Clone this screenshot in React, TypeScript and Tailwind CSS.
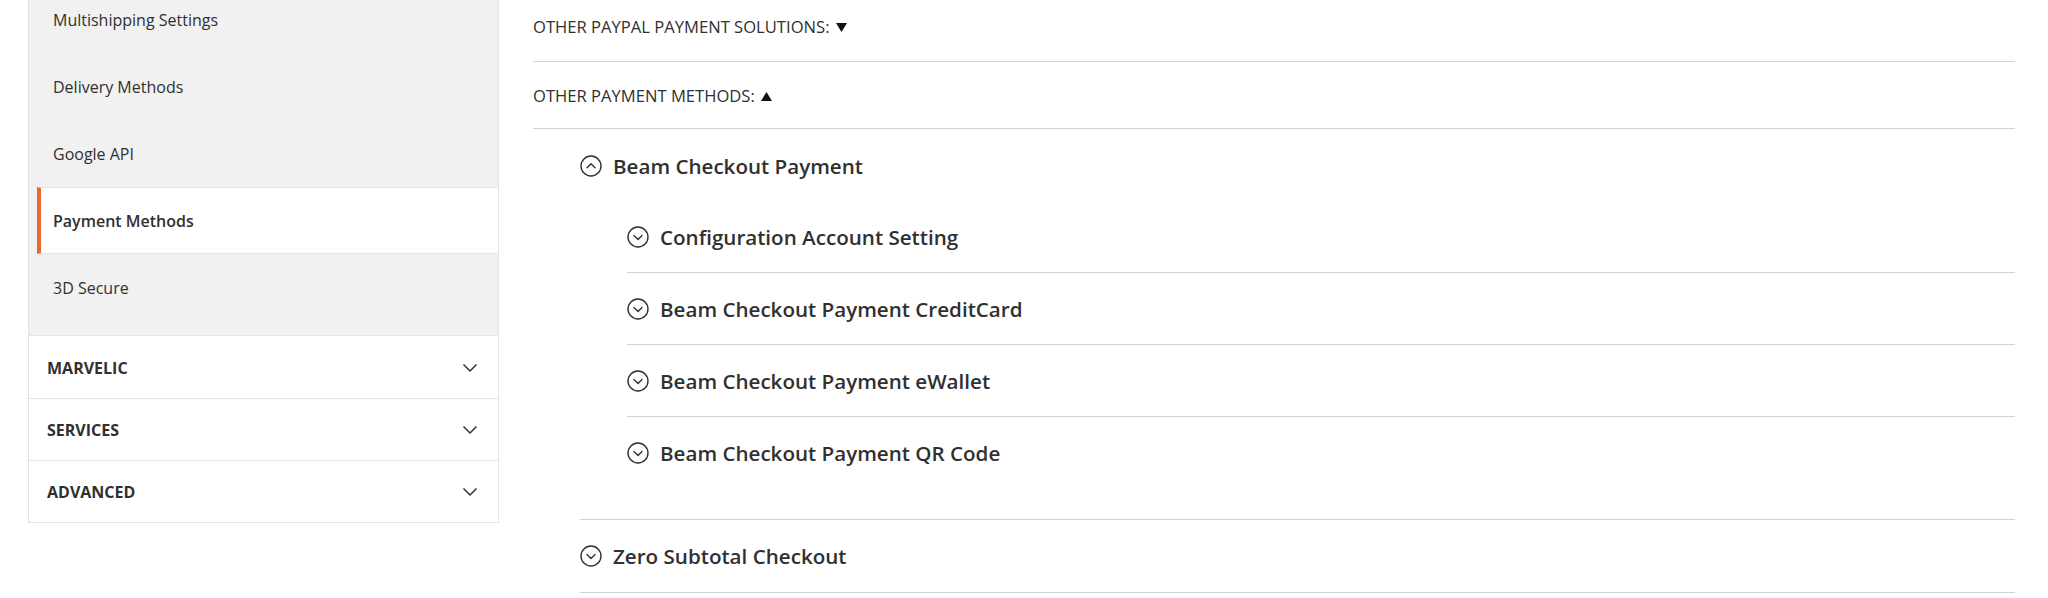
import React from 'react'

const navItems = ['Multishipping Settings', 'Delivery Methods', 'Google API', 'Payment Methods', '3D Secure']
const navSections = ['MARVELIC', 'SERVICES', 'ADVANCED']
const beamChildren = [
  'Configuration Account Setting',
  'Beam Checkout Payment CreditCard',
  'Beam Checkout Payment eWallet',
  'Beam Checkout Payment QR Code',
]

function CircleChevron({ open }: { open?: boolean }) {
  return (
    <svg width="22" height="22" viewBox="0 0 22 22" fill="none" className="shrink-0">
      <circle cx="11" cy="11" r="10" stroke="#303030" strokeWidth="1.4" />
      <path
        d={open ? 'M7 12.8l4-4 4 4' : 'M7 9.4l4 4 4-4'}
        stroke="#303030"
        strokeWidth="1.4"
        strokeLinecap="round"
        strokeLinejoin="round"
      />
    </svg>
  )
}

function Triangle({ up }: { up?: boolean }) {
  return (
    <svg width="11" height="9" viewBox="0 0 11 9" className="shrink-0">
      <path d={up ? 'M5.5 0L11 9H0z' : 'M0 0h11L5.5 9z'} fill="#111" />
    </svg>
  )
}

function SectionHeader({ title, open }: { title: string; open?: boolean }) {
  return (
    <div className="flex items-center gap-[11px] text-[20.6px] font-semibold text-[#303030]">
      <CircleChevron open={open} />
      <span>{title}</span>
    </div>
  )
}

export default function App() {
  return (
    <div className="flex h-[598px] gap-[34px] overflow-hidden bg-white pl-[28px] pr-[33px] font-['Open_Sans',sans-serif] text-[#303030]">
      {/* Sidebar */}
      <aside className="-mt-[14px] w-[471px] shrink-0">
        <ul className="border-x border-[#e3e3e3] bg-[#f1f1f1] pb-[14px]">
          {navItems.map((item) => {
            const active = item === 'Payment Methods'
            return (
              <li
                key={item}
                className={
                  active
                    ? 'ml-[8px] flex h-[67px] items-center border-y border-l-4 border-y-[#e3e3e3] border-l-[#e9692c] bg-white pl-[12px] text-[16px] font-semibold text-[#303030]'
                    : 'ml-[8px] flex h-[67px] items-center pl-[16px] text-[16px] text-[#303030]'
                }
              >
                {item}
              </li>
            )
          })}
        </ul>
        <div className="border border-t-0 border-[#e3e3e3]">
          {navSections.map((s, i) => (
            <div
              key={s}
              className={
                i === 0
                  ? 'flex h-[63px] items-center justify-between border-t border-[#e3e3e3] pl-[18px] pr-[20px] pt-[2px]'
                  : 'flex h-[62px] items-center justify-between border-t border-[#e3e3e3] pl-[18px] pr-[20px]'
              }
            >
              <span className="text-[16px] font-bold text-[#303030]">{s}</span>
              <svg width="16" height="10" viewBox="0 0 16 10" fill="none">
                <path d="M1.5 1.5l6.5 6.5 6.5-6.5" stroke="#303030" strokeWidth="1.5" />
              </svg>
            </div>
          ))}
        </div>
      </aside>

      {/* Main content */}
      <main className="min-w-0 flex-1">
        <div className="flex h-[62px] items-center gap-[6px] border-b border-[#d1d1d1] pb-[6px] text-[16.6px] uppercase">
          <span>Other PayPal Payment Solutions:</span>
          <Triangle />
        </div>
        <div className="flex h-[67px] items-center gap-[6px] border-b border-[#d1d1d1] pt-[2px] text-[16.6px] uppercase">
          <span>Other Payment Methods:</span>
          <Triangle up />
        </div>

        <div className="ml-[47px]">
          <div className="border-b border-[#d1d1d1] pb-[30px]">
            <div className="flex h-[72px] items-center pt-[3px]">
              <SectionHeader title="Beam Checkout Payment" open />
            </div>
            <div className="ml-[47px]">
              {beamChildren.map((c, i) => (
                <div
                  key={c}
                  className={
                    i < beamChildren.length - 1
                      ? 'flex h-[72px] items-center border-b border-[#d1d1d1] pt-[1px]'
                      : 'flex h-[72px] items-center pt-[1px]'
                  }
                >
                  <SectionHeader title={c} />
                </div>
              ))}
            </div>
          </div>
          <div className="flex h-[73px] items-center border-b border-[#d1d1d1] pt-[1px]">
            <SectionHeader title="Zero Subtotal Checkout" />
          </div>
        </div>
      </main>
    </div>
  )
}
